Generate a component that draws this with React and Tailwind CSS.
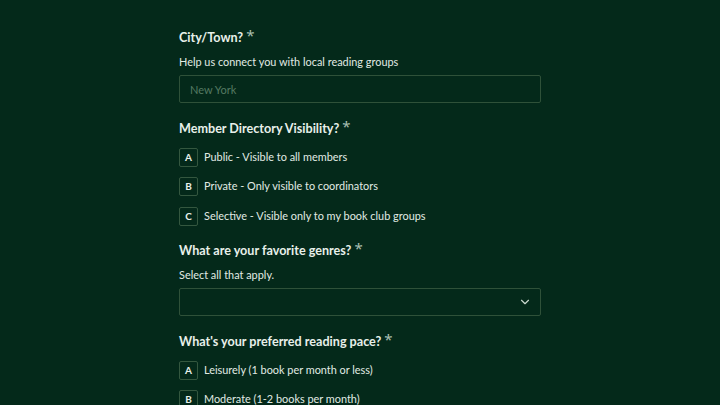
import { ChevronDown } from "lucide-react";

const Question = ({ title, hint, children }) => (
  <div className="flex flex-col">
    <h3 className="text-[12.6px] font-bold text-[#e8f0ea] leading-[18px]">
      {title}{" "}
      <span className="font-['Noto_Sans'] text-[#a9bfb1] text-[15px] font-normal leading-none align-top relative -top-[1px]">*</span>
    </h3>
    {hint && <p className="mt-[7px] text-[10.9px] text-[#e1ebe4] leading-[16px]">{hint}</p>}
    {children}
  </div>
);

const Option = ({ letter, label }) => (
  <label className="flex items-center gap-[6px] h-[19px] cursor-pointer">
    <span className="w-[19px] h-[19px] flex items-center justify-center rounded-[2px] border border-[#34573f] text-[10px] font-bold text-[#e8f0ea]">
      {letter}
    </span>
    <span className="text-[10.9px] text-[#e1ebe4]">{label}</span>
  </label>
);

export default function App() {
  return (
    <div
      className="h-screen overflow-hidden w-full bg-[#04291a] flex justify-center"
      style={{ fontFamily: 'Lato, "Noto Sans", sans-serif' }}
    >
      <div className="w-[362px] pt-[29px] flex flex-col">
        <Question title="City/Town?" hint="Help us connect you with local reading groups">
          <input
            type="text"
            placeholder="New York"
            className="mt-[5px] h-[28px] w-full rounded-[2px] border border-[#2f5139] bg-transparent px-[10px] text-[11px] text-[#e1ebe4] placeholder:text-[#557a62] focus:outline-none"
          />
        </Question>

        <div className="mt-[17px]">
          <Question title="Member Directory Visibility?">
            <div className="mt-[9.5px] flex flex-col gap-[10.5px]">
              <Option letter="A" label="Public - Visible to all members" />
              <Option letter="B" label="Private - Only visible to coordinators" />
              <Option letter="C" label="Selective - Visible only to my book club groups" />
            </div>
          </Question>
        </div>

        <div className="mt-[16px]">
          <Question title="What are your favorite genres?" hint="Select all that apply.">
            <button className="mt-[5.5px] h-[28px] w-full rounded-[2px] border border-[#2f5139] flex items-center justify-end pr-[8px]">
              <ChevronDown className="w-[14px] h-[14px] text-[#c9d8ce]" strokeWidth={2} />
            </button>
          </Question>
        </div>

        <div className="mt-[17px]">
          <Question title="What's your preferred reading pace?">
            <div className="mt-[9.5px] flex flex-col gap-[10.5px]">
              <Option letter="A" label="Leisurely (1 book per month or less)" />
              <Option letter="B" label="Moderate (1-2 books per month)" />
              <Option letter="C" label="Avid (3-4 books per month)" />
            </div>
          </Question>
        </div>
      </div>
    </div>
  );
}
